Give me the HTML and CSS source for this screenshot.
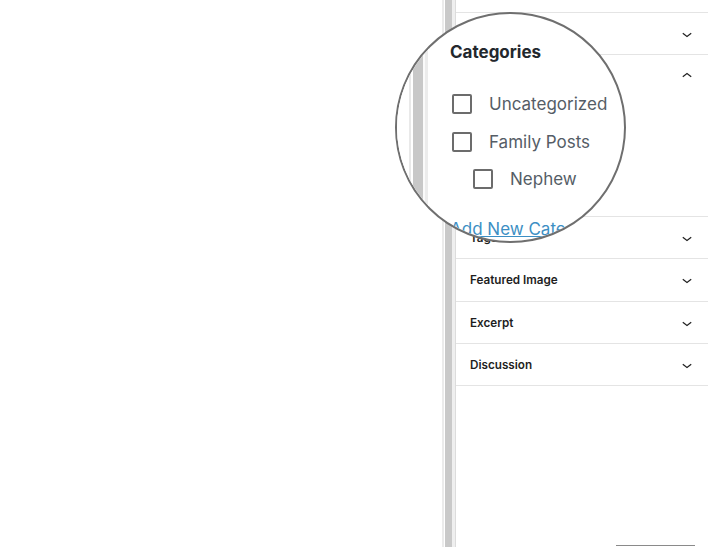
FILE: index.html
```html
<!DOCTYPE html>
<html lang="en">
<head>
  <meta charset="UTF-8" />
  <meta name="viewport" content="width=device-width, initial-scale=1.0" />
  <title>Categories panel</title>
  <link rel="stylesheet" href="styles.css">
</head>
<body>
  <div class="editor">
    <div class="canvas"></div>
    <div class="gutter"></div>

    <div class="sidebar">
      <div class="panel panel-top"></div>
      <div class="panel">
        <span class="panel-title"></span>
        <svg class="chevron" viewBox="0 0 24 24"><path d="M17.5 11.6L12 16l-5.5-4.4.9-1.2L12 14l4.6-3.6z"/></svg>
      </div>
      <div class="panel panel-open">
        <div class="panel-head">
          <span class="panel-title"></span>
          <svg class="chevron" viewBox="0 0 24 24"><path d="M6.5 12.4L12 8l5.5 4.4-.9 1.2L12 10l-4.6 3.6z"/></svg>
        </div>
      </div>
      <div class="panel">
        <span class="panel-title">Tags</span>
        <svg class="chevron" viewBox="0 0 24 24"><path d="M17.5 11.6L12 16l-5.5-4.4.9-1.2L12 14l4.6-3.6z"/></svg>
      </div>
      <div class="panel panel-tall">
        <span class="panel-title">Featured Image</span>
        <svg class="chevron" viewBox="0 0 24 24"><path d="M17.5 11.6L12 16l-5.5-4.4.9-1.2L12 14l4.6-3.6z"/></svg>
      </div>
      <div class="panel">
        <span class="panel-title">Excerpt</span>
        <svg class="chevron" viewBox="0 0 24 24"><path d="M17.5 11.6L12 16l-5.5-4.4.9-1.2L12 14l4.6-3.6z"/></svg>
      </div>
      <div class="panel">
        <span class="panel-title">Discussion</span>
        <svg class="chevron" viewBox="0 0 24 24"><path d="M17.5 11.6L12 16l-5.5-4.4.9-1.2L12 14l4.6-3.6z"/></svg>
      </div>

      <div class="sidebar-footer">
        <button class="footer-btn"></button>
      </div>
    </div>

    <!-- zoomed-in view of the categories panel -->
    <div class="magnifier">
      <div class="mag-gutter"></div>
      <div class="mag-panel">
        <h2 class="mag-title">Categories</h2>
        <ul class="cat-list">
          <li><span class="checkbox"></span>Uncategorized</li>
          <li><span class="checkbox"></span>Family Posts</li>
          <li class="child"><span class="checkbox"></span>Nephew</li>
        </ul>
        <a class="add-link" href="#">Add New Category</a>
      </div>
    </div>
  </div>
</body>
</html>
```

FILE: styles.css
```css
body {
  margin: 0;
  height: 100vh;
  background: #fff;
  font-family: Inter, "Noto Sans", sans-serif;
  color: #1e1e1e;
  overflow: hidden;
}

.editor {
  position: relative;
  display: flex;
  height: 100%;
}

.canvas {
  flex: 1;
}

.gutter {
  width: 13px;
  background: linear-gradient(to right,
    #ebebeb 0 2px, #fff 2px 3px, #c9c9c9 3px 10px, #efefef 10px 13px);
}

.sidebar {
  width: 252px;
  display: flex;
  flex-direction: column;
  border-left: 1px solid #dcdcdc;
}

.panel {
  display: flex;
  align-items: center;
  justify-content: space-between;
  height: 41px;
  padding: 0 11px 0 14px;
  border-bottom: 1px solid #e4e4e4;
}

.panel-top {
  height: 12px;
}

.panel-tall {
  height: 42px;
}

.panel-open {
  display: block;
  height: 161px;
}

.panel-head {
  display: flex;
  align-items: center;
  justify-content: space-between;
  height: 42px;
}

.panel-title {
  font-size: 11.7px;
  font-weight: 600;
}

.chevron {
  width: 20px;
  height: 20px;
  fill: #1e1e1e;
}

.sidebar-footer {
  margin-top: auto;
  display: flex;
  justify-content: flex-end;
  padding-right: 13px;
}

.footer-btn {
  width: 79px;
  height: 2px;
  padding: 0;
  border: 0;
  border-top: 1px solid #8a8a8a;
  background: #fff;
}

/* magnifier */
.magnifier {
  position: absolute;
  left: 395px;
  top: 12px;
  width: 227px;
  height: 227px;
  border: 2px solid #6f6f6f;
  border-radius: 50%;
  background: #fff;
  overflow: hidden;
  display: flex;
}

.mag-gutter {
  width: 32px;
  flex-shrink: 0;
  background: linear-gradient(to right,
    #fff 0 12px, #e9e9e9 12px 14px, #fff 14px 16px, #c8c8c8 16px 26px,
    #fafafa 26px 28px, #ececec 28px 31px, #fff 31px 32px);
}

.mag-panel {
  padding: 28px 0 0 21px;
  white-space: nowrap;
}

.mag-title {
  margin: 0;
  font-size: 17px;
  line-height: 20px;
  font-weight: 700;
  color: #23282d;
}

.cat-list {
  list-style: none;
  margin: 32px 0 0;
  padding: 0 0 0 2px;
  display: flex;
  flex-direction: column;
  gap: 17.5px;
}

.cat-list li {
  display: flex;
  align-items: center;
  gap: 17px;
  height: 20px;
  font-size: 17px;
  color: #555d66;
}

.cat-list .child {
  padding-left: 21px;
}

.checkbox {
  width: 16px;
  height: 16px;
  border: 2px solid #6c6c6c;
  border-radius: 2px;
}

.add-link {
  display: block;
  margin-top: 30px;
  font-size: 17px;
  color: #3d8fc4;
  text-decoration: underline;
}
```
